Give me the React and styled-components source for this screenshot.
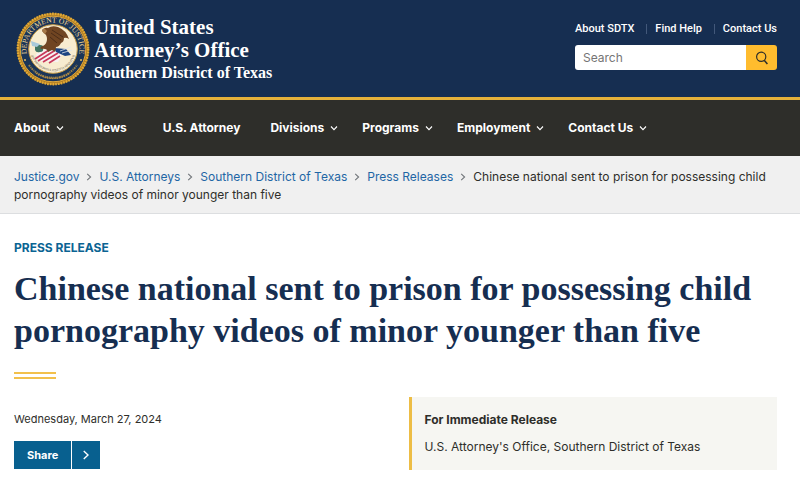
import styled, { createGlobalStyle } from "styled-components"

const navItems = [
  { label: "About", menu: true },
  { label: "News" },
  { label: "U.S. Attorney" },
  { label: "Divisions", menu: true },
  { label: "Programs", menu: true },
  { label: "Employment", menu: true },
  { label: "Contact Us", menu: true },
]

const crumbs = ["Justice.gov", "U.S. Attorneys", "Southern District of Texas", "Press Releases"]

const title = "Chinese national sent to prison for possessing child pornography videos of minor younger than five"

const Seal = () => (
  <svg width="74" height="74" viewBox="0 0 74 74" role="img" aria-label="Department of Justice seal">
    <defs>
      <path id="ringTop" d="M13.5 49.2 A26.5 26.5 0 1 1 60.5 49.2" />
      <path id="ringMid" d="M14.5 41 A23 23 0 0 0 59.5 41" />
      <clipPath id="disc"><circle cx="37" cy="37" r="24" /></clipPath>
    </defs>
    <circle cx="37" cy="37" r="36" fill="#b07d24" />
    <circle cx="37" cy="37" r="35.2" fill="none" stroke="#e3ab36" strokeWidth="2.4" strokeDasharray="1.7 1" />
    <circle cx="37" cy="37" r="32.8" fill="#1b3558" stroke="#e0a83c" strokeWidth="1" />
    <circle cx="37" cy="37" r="24.3" fill="#f8ecd0" stroke="#c79a43" strokeWidth="1" />
    <g clipPath="url(#disc)">
      <path d="M20 42 L32 36 L46 42 L42 50 L22 49 Z" fill="#f7f1f2" />
      <path d="M19 47 L33 38 M22 49 L38 39 M27 50 L42 41 M33 51 L44 44" stroke="#c8385c" strokeWidth="1.7" />
      <path d="M38 36 L50 37 L55 43 L49 44 L40 40 Z" fill="#1d4482" />
      <path d="M44 39 L55 35 M46 41 L56 38" stroke="#dfe6ea" strokeWidth=".8" />
      <path d="M19 34 q2 -3 5 -1 q4 0 3 3 q1 4 -3 4 q-4 1 -5 -2 z" fill="#417563" />
      <path d="M15 29 L24 32 L21 35 L16 34 Z" fill="#a9cadb" />
      <path d="M26 19 q2 -4 6 -3 q4 -3 10 -1 q8 3 11 12 q-3 -2 -5 -1 q0 4 -3 5 q-2 4 -5 4 l-1 5 -3 -2 -4 2 q-1 -4 -7 -3 q-2 -2 2 -3 q4 -2 4 -7 q0 -4 -3 -6 z" fill="#704522" />
      <path d="M26 18 q1 -2 3 -1 l2 2 -2 3 q-2 -1 -3 -4 z" fill="#a77948" />
      <path d="M36 18 l11 7 M35 21 l10 7 M34 25 l7 6" stroke="#4b2d19" strokeWidth="1" />
    </g>
    <SealText fontSize="7.6">
      <textPath href="#ringTop" startOffset="50%">DEPARTMENT OF JUSTICE</textPath>
    </SealText>
    <SealText fontSize="3.2" $dark>
      <textPath href="#ringMid" startOffset="50%">QUI PRO DOMINA JUSTITIA SEQUITUR</textPath>
    </SealText>
    <path d="M13 53 A29 29 0 0 0 61 53" fill="none" stroke="#9a8048" strokeWidth="2" strokeDasharray="1.8 .8 1 .7" />
    <path d="M20 61 A29.5 29.5 0 0 0 54 61" fill="none" stroke="#b58b42" strokeWidth="1.5" strokeDasharray="1.6 .8" />
    <circle cx="9" cy="48" r="1" fill="#e6bd62" />
    <circle cx="65" cy="48" r="1" fill="#e6bd62" />
  </svg>
)

const Chevron = ({ down, size = 8 }) => (
  <svg width={size} height={size} viewBox="0 0 8 8" fill="none" stroke="currentColor" aria-hidden="true">
    <path d={down ? "M1 2.5 L4 5.7 L7 2.5" : "M2.2 .8 L5.6 4 L2.2 7.2"} strokeWidth="1.1" />
  </svg>
)

const App = () => {
  return (
    <>
      <GlobalStyle />
      <Header>
        <Brand href="#">
          <Seal />
          <BrandText>
            <strong>United States<br />Attorney’s Office</strong>
            <span>Southern District of Texas</span>
          </BrandText>
        </Brand>
        <Tools>
          <TopLinks>
            <a href="#about">About SDTX</a>
            <a href="#help">Find Help</a>
            <a href="#contact">Contact Us</a>
          </TopLinks>
          <SearchForm role="search" onSubmit={(e) => e.preventDefault()}>
            <input type="search" placeholder="Search" aria-label="Search" />
            <button type="submit" aria-label="Search">
              <svg width="14" height="14" viewBox="0 0 14 14" fill="none" stroke="currentColor" aria-hidden="true">
                <circle cx="6.2" cy="5.8" r="4.6" strokeWidth="1.2" />
                <path d="M9.2 9.2 L12.4 13" strokeWidth="1.5" />
              </svg>
            </button>
          </SearchForm>
        </Tools>
      </Header>

      <Nav aria-label="Primary">
        {navItems.map(({ label, menu }) =>
          menu ? (
            <NavButton key={label} type="button" aria-haspopup="true">
              {label}
              <Chevron down />
            </NavButton>
          ) : (
            <NavLink key={label} href="#">{label}</NavLink>
          )
        )}
      </Nav>

      <Breadcrumbs aria-label="Breadcrumb">
        <ol>
          {crumbs.map((crumb) => (
            <li key={crumb}>
              <a href="#">{crumb}</a>
              <Chevron />
            </li>
          ))}
          <li aria-current="page">{title}</li>
        </ol>
      </Breadcrumbs>

      <Main>
        <Eyebrow>PRESS RELEASE</Eyebrow>
        <Title>{title}</Title>
        <Rule />
        <Details>
          <div>
            <time dateTime="2024-03-27">Wednesday, March 27, 2024</time>
            <ShareButton type="button">
              <span>Share</span>
              <i><Chevron size={10} /></i>
            </ShareButton>
          </div>
          <ReleaseBox>
            <h2>For Immediate Release</h2>
            <p>U.S. Attorney's Office, Southern District of Texas</p>
          </ReleaseBox>
        </Details>
      </Main>
    </>
  )
}

const GlobalStyle = createGlobalStyle`
  * {
    box-sizing: border-box;
  }

  body {
    margin: 0;
    background: #fff;
    color: #2e2e2a;
    font-family: Inter, "Liberation Sans", sans-serif;
    font-size: 12px;
  }

  a {
    color: inherit;
    text-decoration: none;
  }

  button, input {
    font: inherit;
  }

  h1, h2, p, ol {
    margin: 0;
    padding: 0;
  }
`

const Header = styled.header`
  display: flex;
  justify-content: space-between;
  align-items: flex-start;
  padding: 12px 23px 11px 16px;
  background: #162e51;
  border-bottom: 3px solid #e5b13a;
  color: #fff;
`

const Brand = styled.a`
  display: flex;
  gap: 4px;
`

const BrandText = styled.span`
  display: flex;
  flex-direction: column;
  padding-top: 4px;
  font-family: "Liberation Serif", serif;
  font-weight: bold;

  strong {
    font-size: 21px;
    line-height: 23px;
  }

  span {
    font-size: 16px;
    line-height: 22px;
  }
`

const SealText = styled.text`
  font-family: "Liberation Serif", serif;
  text-anchor: middle;
  fill: ${({ $dark }) => ($dark ? "#5d5546" : "#f0d695")};
`

const Tools = styled.div`
  display: flex;
  flex-direction: column;
  gap: 8px;
  padding-top: 9px;
`

const TopLinks = styled.nav`
  display: flex;
  justify-content: space-between;
  font-family: Roboto, sans-serif;
  font-size: 11px;
  font-weight: 500;
  line-height: 16px;

  a + a {
    padding-left: 9px;
    background: linear-gradient(#42587a, #42587a) left center / 1px 10px no-repeat;
  }
`

const SearchForm = styled.form`
  display: flex;
  width: 202px;
  height: 25px;
  border-radius: 3px;
  overflow: hidden;

  input {
    flex: 1;
    min-width: 0;
    padding: 0 8px;
    border: 0;
    background: #fff;
    color: #2e2e2a;

    &::placeholder {
      color: #757575;
    }
  }

  button {
    display: flex;
    align-items: center;
    justify-content: center;
    width: 31px;
    padding: 0;
    border: 0;
    background: #ffbc2e;
    color: #2e2e2a;
  }
`

const Nav = styled.nav`
  display: flex;
  gap: 24px;
  padding: 0 14px;
  background: #2e2e2a;
  color: #fff;
  font-weight: 700;
  line-height: 56px;
`

const NavButton = styled.button`
  display: flex;
  align-items: center;
  gap: 6px;
  padding: 0;
  border: 0;
  background: none;
  color: inherit;
`

const NavLink = styled.a`
  padding: 0 6px;
`

const Breadcrumbs = styled.nav`
  padding: 12px 23px 9px 14px;
  background: #f0f0f0;
  border-bottom: 1px solid #dcdee0;
  line-height: 18px;

  ol {
    list-style: none;
  }

  li {
    display: inline;
  }

  a {
    color: #1f66a5;
  }

  svg {
    margin: 0 6px;
    color: #71767a;
  }
`

const Main = styled.main`
  padding: 26px 23px 26px 14px;
`

const Eyebrow = styled.p`
  color: #0b6493;
  font-size: 12px;
  font-weight: 700;
  line-height: 16px;
`

const Title = styled.h1`
  margin-top: 12px;
  color: #162e51;
  font-family: "Liberation Serif", serif;
  font-size: 34px;
  font-weight: bold;
  line-height: 42px;
`

const Rule = styled.div`
  width: 42px;
  height: 7px;
  margin-top: 20px;
  border: solid #f2c04c;
  border-width: 2px 0;
`

const Details = styled.div`
  display: grid;
  grid-template-columns: 1fr 1fr;
  gap: 26px;
  margin-top: 18px;

  time {
    display: block;
    padding-top: 14px;
    font-size: 11px;
    line-height: 16px;
  }
`

const ShareButton = styled.button`
  display: flex;
  margin-top: 14px;
  padding: 0;
  border: 0;
  background: #08608f;
  color: #fff;
  font-size: 11px;
  font-weight: 700;
  line-height: 28px;

  span {
    padding: 0 13px;
  }

  i {
    display: flex;
    align-items: center;
    padding: 0 9px;
    border-left: 1px solid #fff;
  }
`

const ReleaseBox = styled.aside`
  padding: 14px 13px;
  border-left: 3px solid #edbd45;
  background: #f6f6f2;

  h2 {
    font-size: 12px;
    font-weight: 700;
    line-height: 18px;
  }

  p {
    margin-top: 9px;
    line-height: 18px;
  }
`

export default App
